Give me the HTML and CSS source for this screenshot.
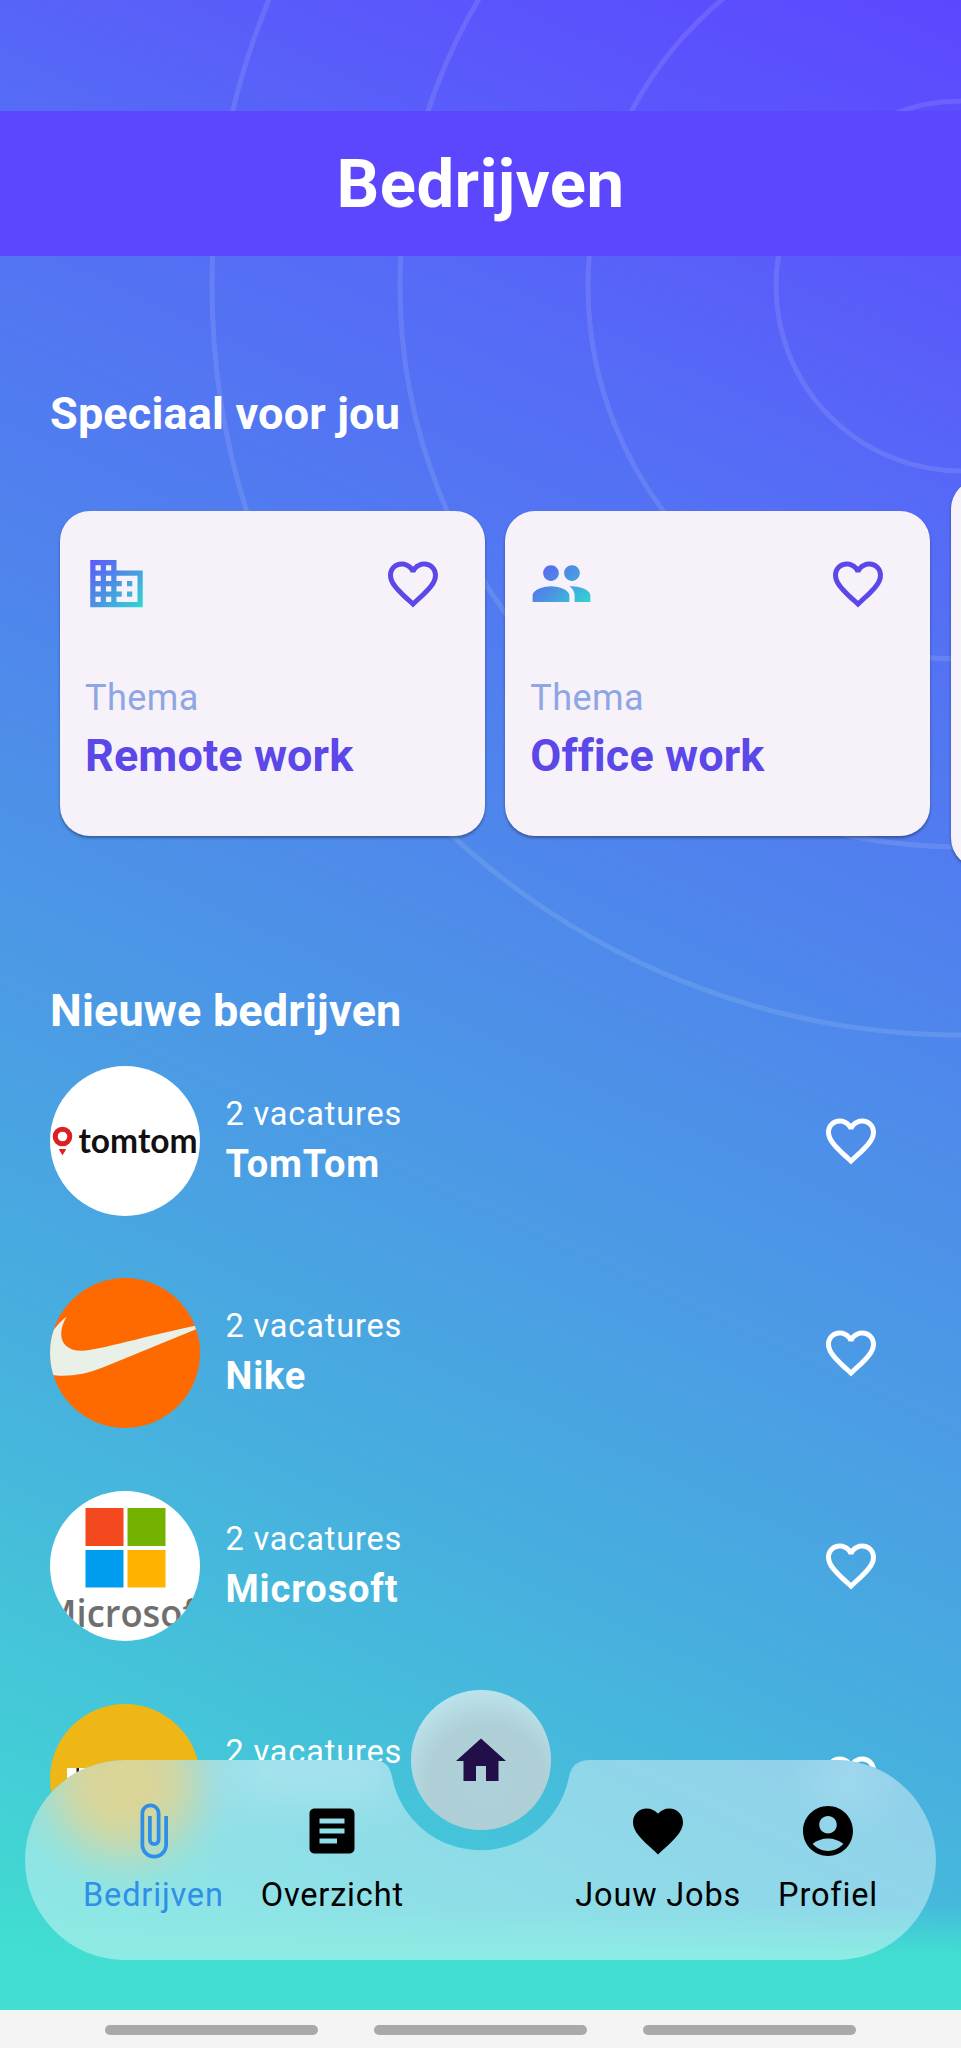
FILE: index.html
```html
<!DOCTYPE html>
<html lang="nl">
<head>
<meta charset="utf-8">
<title>Bedrijven</title>
<link rel="stylesheet" href="styles.css">
</head>
<body>
<svg class="defs" width="0" height="0" aria-hidden="true">
  <defs>
    <linearGradient id="brand" gradientUnits="userSpaceOnUse" x1="2" y1="2" x2="22" y2="22">
      <stop offset="0" stop-color="#5c55fb"/>
      <stop offset="0.5" stop-color="#4b94e2"/>
      <stop offset="1" stop-color="#2edcd2"/>
    </linearGradient>
    <symbol id="heart-outline" viewBox="0 0 24 24"><path d="M16.5 3c-1.74 0-3.41.81-4.5 2.09C10.91 3.81 9.24 3 7.5 3 4.42 3 2 5.42 2 8.5c0 3.78 3.4 6.86 8.55 11.54L12 21.35l1.45-1.32C18.6 15.36 22 12.28 22 8.5 22 5.42 19.58 3 16.5 3zm-4.4 15.55l-.1.1-.1-.1C7.14 14.24 4 11.39 4 8.5 4 6.5 5.5 5 7.5 5c1.54 0 3.04.99 3.57 2.36h1.87C13.46 5.99 14.96 5 16.5 5c2 0 3.5 1.5 3.5 3.5 0 2.89-3.14 5.74-7.9 10.05z"/></symbol>
  </defs>
</svg>

<div class="app">
  <svg class="rings" viewBox="0 0 961 2010" aria-hidden="true">
    <circle cx="961" cy="286" r="185"/>
    <circle cx="961" cy="286" r="373"/>
    <circle cx="961" cy="286" r="561"/>
    <circle cx="961" cy="286" r="749"/>
  </svg>

  <header class="header"><h1 class="title">Bedrijven</h1></header>

  <main class="content">
    <h2 class="section">Speciaal voor jou</h2>
    <div class="carousel">
      <article class="card">
        <div class="card-top">
          <svg class="theme-icon" viewBox="0 0 24 24"><path fill="url(#brand)" d="M12 7V3H2v18h20V7H12zM6 19H4v-2h2v2zm0-4H4v-2h2v2zm0-4H4V9h2v2zm0-4H4V5h2v2zm4 12H8v-2h2v2zm0-4H8v-2h2v2zm0-4H8V9h2v2zm0-4H8V5h2v2zm10 12h-8v-2h2v-2h-2v-2h2v-2h-2V9h8v10zm-2-8h-2v2h2v-2zm0 4h-2v2h2v-2z"/></svg>
          <svg class="heart"><use href="#heart-outline"/></svg>
        </div>
        <p class="card-kind">Thema</p>
        <h3 class="card-name">Remote work</h3>
      </article>
      <article class="card">
        <div class="card-top">
          <svg class="theme-icon" viewBox="0 0 24 24"><path fill="url(#brand)" d="M16 11c1.66 0 2.990-1.340 2.990-3S17.660 5 16 5c-1.660 0-3 1.340-3 3s1.340 3 3 3zm-8 0c1.660 0 2.990-1.340 2.990-3S9.660 5 8 5C6.340 5 5 6.340 5 8s1.340 3 3 3zm0 2c-2.330 0-7 1.170-7 3.500V19h14v-2.500c0-2.330-4.670-3.500-7-3.500zm8 0c-.29 0-.62.020-.97.050 1.160.84 1.970 1.970 1.970 3.450V19h6v-2.500c0-2.330-4.670-3.500-7-3.500z"/></svg>
          <svg class="heart"><use href="#heart-outline"/></svg>
        </div>
        <p class="card-kind">Thema</p>
        <h3 class="card-name">Office work</h3>
      </article>
      <article class="card card-large"></article>
    </div>

    <h2 class="section section-new">Nieuwe bedrijven</h2>
    <ul class="companies">
      <li class="company">
        <svg class="avatar" viewBox="0 0 150 150">
          <rect width="150" height="150" fill="#fff"/>
          <circle cx="12.500" cy="70.500" r="7.300" fill="none" stroke="#dc1f26" stroke-width="5"/>
          <path d="M9.500 83.500h6L12.500 88.500z" fill="#dc1f26" stroke="#dc1f26" stroke-width="1"/>
          <text class="logo-tomtom" x="28.500" y="86.500" textLength="119" lengthAdjust="spacingAndGlyphs">tomtom</text>
        </svg>
        <div class="company-text"><p class="jobs">2 vacatures</p><h3 class="company-name">TomTom</h3></div>
        <svg class="heart"><use href="#heart-outline"/></svg>
      </li>
      <li class="company">
        <svg class="avatar" viewBox="0 0 150 150">
          <rect width="150" height="150" fill="#ff6a00"/>
          <path fill="#e9f0e7" d="M16.700 38.700C7 54 9 73 32 72.700 48 72.500 100 57 145.500 47.800L146 51.200 54 89C32 98 12 99.500-2 96V58C4 52 10 43 16.700 38.700z"/>
        </svg>
        <div class="company-text"><p class="jobs">2 vacatures</p><h3 class="company-name">Nike</h3></div>
        <svg class="heart"><use href="#heart-outline"/></svg>
      </li>
      <li class="company">
        <svg class="avatar" viewBox="0 0 150 150">
          <rect width="150" height="150" fill="#fff"/>
          <path fill="#f4481f" d="M35.500 17h38v38h-38z"/>
          <path fill="#74b200" d="M77.500 17h38v38h-38z"/>
          <path fill="#009cf0" d="M35.500 59h38v37.500h-38z"/>
          <path fill="#ffb300" d="M77.500 59h38v37.500h-38z"/>
          <text class="logo-microsoft" x="-7" y="136" textLength="167" lengthAdjust="spacingAndGlyphs">Microsoft</text>
        </svg>
        <div class="company-text"><p class="jobs">2 vacatures</p><h3 class="company-name">Microsoft</h3></div>
        <svg class="heart"><use href="#heart-outline"/></svg>
      </li>
      <li class="company">
        <svg class="avatar" viewBox="0 0 150 150">
          <rect width="150" height="150" fill="#efb715"/>
          <path fill="#fff" d="M17 64h34V77H17z"/>
          <path fill="#222" d="M26.500 64h2.500v5h-2.500z"/>
        </svg>
        <div class="company-text"><p class="jobs">2 vacatures</p></div>
        <svg class="heart"><use href="#heart-outline"/></svg>
      </li>
    </ul>
  </main>

  <nav class="nav">
    <svg class="glass" viewBox="0 0 911 200" aria-hidden="true">
      <defs>
        <clipPath id="bar"><path d="M100 0H347C360 0 364.500 6 366.900 16A90 90 0 0 0 544.100 16C546.500 6 552 0 566 0H811A100 100 0 0 1 811 200H100A100 100 0 0 1 100 0Z"/></clipPath>
        <filter id="soft" filterUnits="userSpaceOnUse" x="-100" y="-150" width="1111" height="400"><feGaussianBlur stdDeviation="23"/></filter>
      </defs>
      <g clip-path="url(#bar)">
        <g filter="url(#soft)">
          <circle cx="100" cy="22" r="74" fill="#ecb42a" fill-opacity="0.75"/>
          <rect x="205" y="-20" width="165" height="60" fill="#fff" fill-opacity="0.22"/>
          <rect x="795" y="-5" width="60" height="50" fill="#fff" fill-opacity="0.2"/>
        </g>
        <rect width="911" height="200" fill="#fff" fill-opacity="0.4"/>
      </g>
    </svg>
    <div class="nav-items">
      <a class="nav-item nav-active">
        <svg class="nav-icon" viewBox="0 0 24 24"><path d="M16.500 6v11.500c0 2.210-1.790 4-4 4s-4-1.790-4-4V5c0-1.380 1.120-2.500 2.500-2.500s2.500 1.120 2.500 2.500v10.500c0 .55-.45 1-1 1s-1-.45-1-1V6H10v9.500c0 1.380 1.120 2.500 2.500 2.500s2.500-1.120 2.500-2.500V5c0-2.210-1.790-4-4-4S7 2.790 7 5v12.500c0 3.040 2.460 5.500 5.500 5.500s5.500-2.460 5.500-5.500V6h-1.500z"/></svg>
        <span>Bedrijven</span>
      </a>
      <a class="nav-item">
        <svg class="nav-icon" viewBox="0 0 24 24"><path d="M19 3H5c-1.100 0-2 .9-2 2v14c0 1.100.9 2 2 2h14c1.100 0 2-.9 2-2V5c0-1.100-.9-2-2-2zm-5 14H7v-2h7v2zm3-4H7v-2h10v2zm0-4H7V7h10v2z"/></svg>
        <span>Overzicht</span>
      </a>
      <a class="nav-item nav-push">
        <svg class="nav-icon" viewBox="0 0 24 24"><path d="M12 21.350l-1.450-1.320C5.400 15.360 2 12.280 2 8.500 2 5.420 4.420 3 7.500 3c1.740 0 3.410.81 4.500 2.090C13.090 3.810 14.760 3 16.500 3 19.580 3 22 5.420 22 8.500c0 3.780-3.400 6.860-8.550 11.540L12 21.350z"/></svg>
        <span>Jouw Jobs</span>
      </a>
      <a class="nav-item">
        <svg class="nav-icon" viewBox="0 0 24 24"><path d="M12 2C6.480 2 2 6.480 2 12s4.480 10 10 10 10-4.480 10-10S17.520 2 12 2zm0 4c1.930 0 3.500 1.570 3.500 3.500S13.930 13 12 13s-3.500-1.570-3.500-3.500S10.070 6 12 6zm0 14c-2.030 0-4.430-.82-6.140-2.880C7.550 15.800 9.680 15 12 15s4.450.8 6.140 2.120C16.430 19.180 14.030 20 12 20z"/></svg>
        <span>Profiel</span>
      </a>
    </div>
    <div class="fab"><svg class="nav-icon" viewBox="0 0 24 24"><path d="M10 20v-6h4v6h5v-8h3L12 3 2 12h3v8z"/></svg></div>
  </nav>
</div>

<footer class="system-bar"><i class="pill"></i><i class="pill"></i><i class="pill"></i></footer>
</body>
</html>
```
FILE: styles.css
```css
* { box-sizing: border-box; }
body, h1, h2, h3, p, ul { margin: 0; padding: 0; }
ul { list-style: none; }
svg { display: block; flex: none; }

body {
  width: 961px;
  height: 2048px;
  overflow: hidden;
  display: flex;
  flex-direction: column;
  font-family: Roboto, "Liberation Sans", sans-serif;
  color: #fff;
}
.defs { position: absolute; }

.app {
  position: relative;
  height: 2010px;
  overflow: hidden;
  padding-top: 111px;
  background:
    linear-gradient(180deg, rgba(65, 222, 209, 0) 1905px, #41ded1 1955px),
    linear-gradient(205deg, #5c47ff 0, #5a59fb 270px, #556cf6 500px, #4f83ed 890px, #4b9be5 1290px, #47b0de 1620px, #44c8d8 1930px, #41ded1 2200px);
}
.rings {
  position: absolute;
  inset: 0;
  width: 961px;
  height: 2010px;
  fill: none;
  stroke: rgba(255, 255, 255, 0.11);
  stroke-width: 5px;
}

.header {
  position: relative;
  height: 145px;
  display: flex;
  align-items: center;
  justify-content: center;
  background: #5c47ff;
}
.title { font-size: 67px; line-height: 80px; font-weight: 700; letter-spacing: 0.5px; }

/* The list ends where the bottom bar's outline begins. */
.content {
  position: relative;
  padding-top: 131px;
  clip-path: path("M0 0H961V1604H936A100 100 0 0 0 836 1504H591C577 1504 571.500 1510 569.100 1520A90 90 0 0 1 391.900 1520C389.500 1510 385 1504 372 1504H125A100 100 0 0 0 25 1604H0Z");
}
.section {
  padding-left: 50px;
  font-size: 45px;
  line-height: 53px;
  font-weight: 700;
  letter-spacing: 0.170px;
}
.section-new { margin-top: 116px; }

.carousel {
  display: flex;
  align-items: center;
  gap: 20.300px;
  height: 389px;
  margin-top: 39px;
  padding-left: 60px;
}
.card {
  flex: none;
  width: 425px;
  height: 325px;
  padding: 41px 42px 0 25px;
  border-radius: 30px;
  background: #f7f2fa;
  box-shadow: 0 2px 3px rgba(0, 0, 0, 0.35);
  color: #5c47e8;
}
.card-large { height: 389px; }
.card-top { display: flex; align-items: center; justify-content: space-between; }
.theme-icon { width: 63px; height: 63px; }
.card-kind { margin-top: 61px; font-size: 36px; line-height: 44px; letter-spacing: 0.450px; color: #8ea6e3; }
.card-name { margin-top: 9px; font-size: 45px; line-height: 53px; font-weight: 700; letter-spacing: 0.100px; }

.heart { width: 60px; height: 60px; fill: currentColor; }

.companies {
  display: flex;
  flex-direction: column;
  gap: 62.700px;
  margin-top: 28.700px;
  padding: 0 80px 0 50px;
}
.company { display: flex; align-items: center; height: 150px; }
.avatar { width: 150px; height: 150px; border-radius: 50%; }
.company-text { flex: 1; height: 104px; padding-left: 25.500px; }
.jobs { font-size: 32.500px; line-height: 51px; letter-spacing: 0.830px; }
.company-name { font-size: 38px; line-height: 49px; font-weight: 700; letter-spacing: 0.850px; }
.logo-tomtom { font: 700 35px Lato, sans-serif; fill: #111; }
.logo-microsoft { font: 600 37px "Open Sans", sans-serif; fill: #6f6f6f; }

.nav {
  position: absolute;
  left: 25px;
  top: 1760px;
  width: 911px;
  height: 200px;
}
.glass {
  position: absolute;
  inset: 0;
  width: 911px;
  height: 200px;
}
.nav-items {
  position: relative;
  display: flex;
  gap: 37px;
  padding: 41px 58px 0;
  color: #000;
}
.nav-item {
  display: flex;
  flex-direction: column;
  align-items: center;
  gap: 15px;
  font-size: 32.500px;
  line-height: 39px;
  letter-spacing: 0.830px;
}
.nav-active { color: #2f8fe8; }
.nav-push { margin-left: auto; }
.nav-icon { width: 60px; height: 60px; fill: currentColor; }
.fab {
  position: absolute;
  left: 385.500px;
  top: -70px;
  width: 140px;
  height: 140px;
  padding-top: 1px;
  border-radius: 50%;
  display: flex;
  align-items: center;
  justify-content: center;
  color: #220f49;
  background: radial-gradient(circle at 54% 66%, #aed0d8 0, #aecfd6 58px, #bce4ed 94px);
}

.system-bar {
  height: 38px;
  display: flex;
  justify-content: center;
  gap: 56px;
  padding-top: 15px;
  background: #f4f4f4;
}
.pill { width: 213px; height: 10px; border-radius: 5px; background: #a9a9a9; }
```
